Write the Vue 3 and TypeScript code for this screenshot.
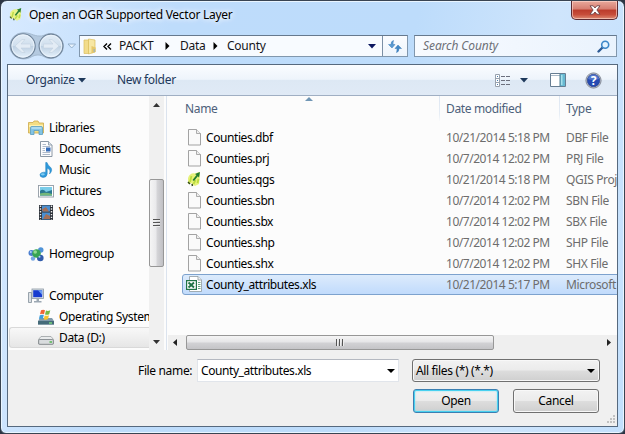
<script setup lang="ts">
interface TreeItem {
  label: string
  icon: string
  level: number
  selected?: boolean
}
interface FileRow {
  name: string
  date: string
  type: string
  icon: 'file' | 'qgis' | 'excel'
  selected?: boolean
}

const groups: TreeItem[][] = [
  [
    { label: 'Libraries', icon: 'libraries', level: 0 },
    { label: 'Documents', icon: 'documents', level: 1 },
    { label: 'Music', icon: 'music', level: 1 },
    { label: 'Pictures', icon: 'pictures', level: 1 },
    { label: 'Videos', icon: 'videos', level: 1 },
  ],
  [{ label: 'Homegroup', icon: 'homegroup', level: 0 }],
  [
    { label: 'Computer', icon: 'computer', level: 0 },
    { label: 'Operating System', icon: 'system', level: 1 },
    { label: 'Data (D:)', icon: 'drive', level: 1, selected: true },
  ],
]

const files: FileRow[] = [
  { name: 'Counties.dbf', date: '10/21/2014 5:18 PM', type: 'DBF File', icon: 'file' },
  { name: 'Counties.prj', date: '10/7/2014 12:02 PM', type: 'PRJ File', icon: 'file' },
  { name: 'Counties.qgs', date: '10/21/2014 5:18 PM', type: 'QGIS Proj', icon: 'qgis' },
  { name: 'Counties.sbn', date: '10/7/2014 12:02 PM', type: 'SBN File', icon: 'file' },
  { name: 'Counties.sbx', date: '10/7/2014 12:02 PM', type: 'SBX File', icon: 'file' },
  { name: 'Counties.shp', date: '10/7/2014 12:02 PM', type: 'SHP File', icon: 'file' },
  { name: 'Counties.shx', date: '10/7/2014 12:02 PM', type: 'SHX File', icon: 'file' },
  { name: 'County_attributes.xls', date: '10/21/2014 5:17 PM', type: 'Microsoft', icon: 'excel', selected: true },
]
</script>

<template>
  <div class="window">
    <header class="titlebar">
      <svg class="app-icon" viewBox="0 0 16 16">
        <path d="M1 7 Q3 1 9 2 L13 1 L14 4 L13 13 L9 15 L5 12 L2 13 Z" fill="#e9f38a" />
        <path d="M3.5 11 L5 5 M7 13 L9.5 9 M11.5 12 L12.5 8" stroke="#c0dc48" stroke-width="1.8" />
        <path d="M6.5 8.5 L10.5 3.5 L9 2.5 L14 .5 L13 6 L11.7 4.8 L8 9.5 Z" fill="#2b8038" />
        <path d="M1 10.5 L3 12.5 M5 12.5 L6 14.5" stroke="#3d5a28" stroke-width="1.3" />
      </svg>
      <h1 class="title">Open an OGR Supported Vector Layer</h1>
      <button class="close" aria-label="Close">
        <svg viewBox="0 0 12 10" width="12" height="10">
          <path d="M1 .8 H4.2 L6 3 L7.8 .8 H11 L7.9 5 L11 9.2 H7.8 L6 7 L4.2 9.2 H1 L4.1 5 Z" fill="#fff" stroke="#6d4145" stroke-width=".9" />
        </svg>
      </button>
    </header>

    <nav class="address-row">
      <svg class="nav-buttons" width="70" height="28" viewBox="0 0 70 28">
        <defs>
          <linearGradient id="orb" x1="0" y1="0" x2="0" y2="1">
            <stop offset="0" stop-color="#e3edf7" />
            <stop offset=".48" stop-color="#d0dfed" />
            <stop offset=".52" stop-color="#bfd1e3" />
            <stop offset="1" stop-color="#e6f2fc" />
          </linearGradient>
        </defs>
        <path d="M14 .7 C22 .7 24 4 31 4 C36 4 36 1.5 42 1.5 A12.4 12.4 0 0 1 42 26.5 C35 26.5 35 23 29 23 C23 23 22 27 14 27 A13 13 0 0 1 14 .7Z" fill="#b4c9df" stroke="#9db2c8" stroke-width=".8" />
        <circle cx="14" cy="14" r="12.2" fill="url(#orb)" stroke="#70849a" stroke-width="1.1" />
        <circle cx="14" cy="14" r="11" fill="none" stroke="#edf5fc" stroke-width=".8" />
        <circle cx="42" cy="14" r="11.9" fill="url(#orb)" stroke="#70849a" stroke-width="1.1" />
        <circle cx="42" cy="14" r="10.7" fill="none" stroke="#edf5fc" stroke-width=".8" />
        <path d="M6 14 L13 7.5 H16 L12 12 H21.5 V16 H12 L16 20.5 H13 Z" fill="#e3ecf5" stroke="#c3d1df" stroke-width=".6" />
        <path d="M50 14 L43 7.5 H40 L44 12 H34.5 V16 H44 L40 20.5 H43 Z" fill="#e3ecf5" stroke="#c3d1df" stroke-width=".6" />
        <path d="M59 12 H66.5 L62.7 16 Z" fill="#e8f3fd" stroke="#8fabc8" stroke-width=".9" />
      </svg>
      <div class="address">
        <svg width="14" height="17" viewBox="0 0 14 17">
          <path d="M1 2 H6 V15.5 H1 Z" fill="#f2dc8b" stroke="#dbbf62" stroke-width=".7" />
          <path d="M5.5 1 L12 2 V14 L5.5 16 Z" fill="#f7e7a4" stroke="#d9bb5a" stroke-width=".7" />
          <path d="M8.5 8 L12.7 9.5 V14 L8.5 15.5 Z" fill="#e6c86a" />
          <path d="M11.2 11 V14" stroke="#8faecb" />
        </svg>
        <svg class="chevrons" width="9" height="7" viewBox="0 0 9 7">
          <path d="M4 .5 L1 3.5 L4 6.5 M8 .5 L5 3.5 L8 6.5" fill="none" stroke="#000" stroke-width="1.4" />
        </svg>
        <span class="crumb c1">PACKT</span>
        <svg class="sep" width="5" height="8" viewBox="0 0 5 8"><path d="M.5 0 L4.5 4 L.5 8Z" /></svg>
        <span class="crumb c2">Data</span>
        <svg class="sep" width="5" height="8" viewBox="0 0 5 8"><path d="M.5 0 L4.5 4 L.5 8Z" /></svg>
        <span class="crumb c3">County</span>
        <svg class="drop" width="8" height="5" viewBox="0 0 8 5"><path d="M0 0 H8 L4 4.5Z" fill="#0b1660" /></svg>
        <button class="refresh" aria-label="Refresh">
          <svg width="14" height="13" viewBox="0 0 14 13">
            <path d="M5.5 .5 Q3 1 3 4.5 H.5 L4 8 L7 4.5 H5 Q5 2 5.5 .5Z" fill="#5b9bd2" stroke="#3879b5" stroke-width=".5" />
            <path d="M8.5 12.5 Q11 12 11 8.5 H13.5 L10 5 L7 8.5 H9 Q9 11 8.5 12.5Z" fill="#4288c6" stroke="#3879b5" stroke-width=".5" />
          </svg>
        </button>
      </div>
      <div class="search">
        <span>Search County</span>
        <svg width="13" height="13" viewBox="0 0 13 13">
          <path d="M6 7 L1.5 11.5" stroke="#2d5b95" stroke-width="2.4" stroke-linecap="round" />
          <circle cx="8.2" cy="4.7" r="3.5" fill="#e3f3ff" stroke="#3c87c8" stroke-width="1.6" />
        </svg>
      </div>
    </nav>

    <main class="client">
      <div class="toolbar">
        <span class="organize">Organize</span>
        <svg class="org-arrow" width="8" height="5" viewBox="0 0 8 5"><path d="M0 0 H8 L4 4.6Z" fill="#1e395b" /></svg>
        <span class="new-folder">New folder</span>
        <svg class="views" width="16" height="13" viewBox="0 0 16 13">
          <path d="M.5 .5 H4.5 V12.5 H.5 Z M.5 4.5 H4.5 M.5 8.5 H4.5" fill="#fff" stroke="#98a1ad" />
          <path d="M2 2.5 H3 M2 6.5 H3 M2 10.5 H3" stroke="#477db1" />
          <path d="M6 2.5 H10 M11 2.5 H15 M6 6.5 H10 M11 6.5 H15 M6 10.5 H10 M11 10.5 H15" stroke="#6b6f7d" />
        </svg>
        <svg class="view-arrow" width="8" height="5" viewBox="0 0 8 5"><path d="M0 0 H8 L4 4.6Z" fill="#1e395b" /></svg>
        <svg class="preview" width="16" height="14" viewBox="0 0 16 14">
          <path d="M.5 .5 H15.5 V13.5 H.5 Z" fill="#fff" stroke="#667d92" />
          <path d="M1 2.5 H10" stroke="#a9b9c8" />
          <path d="M10 1 H15 V13 H10 Z" fill="#67b9d2" />
          <path d="M11 2 H12.5 V12 H11Z" fill="#a6e1ec" />
          <path d="M10 1 V13" stroke="#517e93" />
        </svg>
        <svg class="help" width="17" height="17" viewBox="0 0 17 17">
          <circle cx="8.5" cy="8.5" r="7.6" fill="#d6d9de" stroke="#777e8b" stroke-width=".9" />
          <circle cx="8.5" cy="8.5" r="6.3" fill="#264bb2" stroke="#243b80" stroke-width=".6" />
          <path d="M3 7 Q4 2.8 8.5 2.8 Q13 2.8 14 7 Q8 9 3 7Z" fill="#5377cd" />
          <text x="8.5" y="12.8" text-anchor="middle" fill="#fff" font-size="12" font-weight="700">?</text>
        </svg>
      </div>

      <div class="browser">
        <aside class="tree">
          <ul v-for="(group, g) in groups" :key="g">
            <li v-for="item in group" :key="item.label" :class="['node', 'level-' + item.level, { current: item.selected }]">
              <svg width="16" height="16" viewBox="0 0 16 16">
                <g v-if="item.icon === 'libraries'">
                  <path d="M.5 13 V2.5 H5 L6 1 H10 L11 3 H15.5 V13 Z" fill="#f3dd83" stroke="#cda84a" stroke-width=".8" />
                  <path d="M1 5 H15 V7 H1Z" fill="#fff1ad" />
                  <path d="M2.5 14.5 V7.5 Q2.5 6.5 4 6.5 H13 Q14.5 6.5 14.5 7.5 V14.5 H11 V10.5 H6 V14.5 Z" fill="#83c4e4" stroke="#5c9dc0" stroke-width=".8" />
                  <path d="M3.5 8 H13.5" stroke="#d6f0fa" />
                </g>
                <g v-else-if="item.icon === 'documents'">
                  <path d="M2.5 .5 H10.5 L14 4 V15.5 H2.5 Z" fill="#fdfdfe" stroke="#7f8d9c" stroke-width=".9" />
                  <path d="M10.5 .5 V4 H14" fill="#dce4ec" stroke="#8795a3" stroke-width=".8" />
                  <path d="M4.5 3.5 H8 M4.5 5.5 H12 M4.5 7.5 H7 M4.5 9.5 H7 M4.5 11.5 H12 M4.5 13.5 H12" stroke="#9baabd" stroke-width=".8" />
                  <rect x="8" y="6.5" width="4.5" height="4" fill="#356dba" />
                </g>
                <g v-else-if="item.icon === 'music'">
                  <path d="M7.7 .5 H9 Q9.6 3.2 12.5 5.2 Q15.3 8.2 11.5 12 Q13.2 7.5 9.2 6.2 V12 Q8.7 15.5 5 15.5 Q1.7 15.2 2 12.6 Q2.7 9.9 7.7 10.2 Z" fill="#2e99dc" stroke="#2381bd" stroke-width=".5" />
                  <ellipse cx="4.8" cy="12.3" rx="2" ry="1.1" fill="#81cdf2" />
                </g>
                <g v-else-if="item.icon === 'pictures'">
                  <rect x=".5" y="2.5" width="15" height="11.5" fill="#fff" stroke="#929ba5" stroke-width=".9" />
                  <rect x="2" y="4" width="12" height="8.5" fill="#79cce9" />
                  <path d="M2 8 Q5 5 8 9 L14 7 V12.5 H2Z" fill="#2b7890" />
                  <path d="M2 10.5 Q8 9 14 11 V12.5 H2Z" fill="#75b879" />
                </g>
                <g v-else-if="item.icon === 'videos'">
                  <rect x="1" y="1" width="14" height="15" fill="#2b3038" />
                  <path d="M4 1.5 H12 V7.5 H4Z M4 8.5 H12 V15.5 H4Z" fill="#4b8fd0" />
                  <path d="M4 5.5 L8 3 L11 7.5 H5Z M5 15 L8 10 L12 12 V15Z" fill="#a66f57" />
                  <path d="M2.5 1.5 V16 M13.5 1.5 V16" stroke="#eee" stroke-width="1.4" stroke-dasharray="1.4 1.4" />
                </g>
                <g v-else-if="item.icon === 'homegroup'">
                  <circle cx="3.5" cy="7" r="3" fill="#4a7ed0" />
                  <circle cx="12.8" cy="4" r="2.7" fill="#4f93d8" />
                  <circle cx="12.3" cy="12" r="3.3" fill="#315cac" />
                  <circle cx="5" cy="12.5" r="2.2" fill="#77a7e2" />
                  <circle cx="8.5" cy="7.5" r="4.3" fill="#36a453" />
                  <circle cx="7.2" cy="6" r="1.8" fill="#93da92" />
                  <circle cx="11.5" cy="10.8" r="1" fill="#a9cdf5" />
                  <circle cx="2.8" cy="6" r="1" fill="#b3d5f8" />
                </g>
                <g v-else-if="item.icon === 'computer'">
                  <path d="M.5 4.5 H3.5 V14.5 H.5Z" fill="#dce1e5" stroke="#838f9b" stroke-width=".8" />
                  <rect x="4" y="1" width="11.5" height="9.5" fill="#dce2e8" stroke="#8b98a4" stroke-width=".8" />
                  <rect x="5.2" y="2.2" width="9" height="7" fill="#173bd0" />
                  <path d="M10 2.2 H14.2 V7Z" fill="#6c9df2" />
                  <path d="M8.5 11 H11 V13 H13.5 V14.5 H6 V13 H8.5Z" fill="#9ca8b3" />
                </g>
                <g v-else-if="item.icon === 'system'">
                  <path d="M2 9 H14 L16 12 V15.5 H0 V12Z" fill="#819aaa" />
                  <path d="M0 12 H16 V15.5 H0Z" fill="#456b79" />
                  <path d="M11 14 H14" stroke="#80e57c" stroke-width="1.3" />
                  <path d="M3 1.3 Q5 .2 7 1.2 L6 5.2 Q4 4.2 2 5.2Z" fill="#f16435" />
                  <path d="M8 1.6 Q10 2.5 12.3 1.3 L11.2 5.2 Q9 6.4 7 5.4Z" fill="#78b944" />
                  <path d="M1.8 6.2 Q4 5.2 5.8 6.1 L4.8 10 Q3 9 .9 10Z" fill="#3e9edc" />
                  <path d="M6.7 6.4 Q9 7.4 11 6.2 L10 10 Q8 11.3 5.7 10.2Z" fill="#f8c42e" />
                </g>
                <g v-else>
                  <path d="M3 6.5 H13 L15.5 9.5 V14 H.5 V9.5Z" fill="#e9ebec" stroke="#9b9fa2" stroke-width=".8" />
                  <rect x=".7" y="9.5" width="14.6" height="4.8" rx="1" fill="#d9dcde" stroke="#777d81" stroke-width=".8" />
                  <path d="M11.5 12 H14" stroke="#52b64f" stroke-width="1.5" />
                </g>
              </svg>
              <span>{{ item.label }}</span>
            </li>
          </ul>
        </aside>

        <div class="vscroll">
          <svg width="7" height="4" viewBox="0 0 7 4"><path d="M0 4 L3.5 0 L7 4Z" fill="#333" /></svg>
          <div class="vthumb"><i></i><i></i><i></i></div>
          <svg width="7" height="4" viewBox="0 0 7 4"><path d="M0 0 L3.5 4 L7 0Z" fill="#333" /></svg>
        </div>

        <section class="listing">
          <div class="columns">
            <div class="col-name">
              <span>Name</span>
              <svg class="sort" width="8" height="4" viewBox="0 0 8 4"><path d="M0 4 L4 0 L8 4Z" fill="#7096b5" /></svg>
            </div>
            <div class="col-date">Date modified</div>
            <div class="col-type">Type</div>
          </div>
          <div class="rows">
            <div v-for="file in files" :key="file.name" :class="['row', { chosen: file.selected }]">
              <div class="cell-name">
                <svg width="17" height="17" viewBox="0 0 17 17">
                  <g v-if="file.icon === 'file'">
                    <path d="M2.5 .5 H10.5 L14.5 4.5 V16 H2.5 Z" fill="#fafafa" stroke="#999" stroke-width=".9" />
                    <path d="M10.5 .5 V4.5 H14.5" fill="#eee" stroke="#999" stroke-width=".8" />
                  </g>
                  <g v-else-if="file.icon === 'qgis'">
                    <path d="M2 7 Q4 1.5 9 2.5 L13 1 L14 4 L13 13 L9 15 L5 12 L2 13 Z" fill="#e6f27a" />
                    <path d="M4 11 L5.5 5 M7.5 13 L9.5 9 M11.5 12 L12.5 8" stroke="#bcdc3e" stroke-width="1.8" />
                    <path d="M6.5 9 L10.5 4 L9 3 L14 1 L13 6.5 L11.8 5.2 L8 10 Z" fill="#1f7a2e" />
                    <path d="M2 11 L4 13 M6 13 L6.5 15" stroke="#314b18" stroke-width="1.5" />
                  </g>
                  <g v-else>
                    <path d="M3.5 .5 H12 L15.5 4 V15.5 H3.5 Z" fill="#fff" stroke="#8f9ba0" stroke-width=".8" />
                    <path d="M12 .5 V4 H15.5" fill="#eef1f2" stroke="#8f9ba0" stroke-width=".8" />
                    <path d="M12 6.5 H14.5 M12 8.5 H14.5 M12 10.5 H14.5 M12 12.5 H14.5" stroke="#66a67f" />
                    <rect x=".6" y="4.6" width="9.8" height="8.8" fill="#fff" stroke="#217446" stroke-width="1.2" />
                    <path d="M2.5 6.5 L8 11.5 M8 6.5 L2.5 11.5" stroke="#217446" stroke-width="1.9" />
                  </g>
                </svg>
                <span>{{ file.name }}</span>
              </div>
              <div class="cell-date">{{ file.date }}</div>
              <div class="cell-type">{{ file.type }}</div>
            </div>
          </div>
          <div class="hscroll">
            <svg width="4" height="7" viewBox="0 0 4 7"><path d="M4 0 L0 3.5 L4 7Z" fill="#222" /></svg>
            <div class="hthumb"><i></i><i></i><i></i></div>
            <svg class="right" width="4" height="7" viewBox="0 0 4 7"><path d="M0 0 L4 3.5 L0 7Z" fill="#222" /></svg>
          </div>
        </section>
      </div>

      <footer class="footer">
        <div class="name-line">
          <label>File name:</label>
          <div class="combo"><span>County_attributes.xls</span><svg width="8" height="4" viewBox="0 0 8 4"><path d="M0 0 H8 L4 4Z" /></svg></div>
          <div class="filter"><span>All files (*) (*.*)</span><svg width="8" height="4" viewBox="0 0 8 4"><path d="M0 0 H8 L4 4Z" /></svg></div>
        </div>
        <div class="actions">
          <button class="btn primary">Open</button>
          <button class="btn">Cancel</button>
        </div>
        <svg class="grip" width="8" height="8" viewBox="0 0 8 8">
          <path d="M6 0h2v2h-2z M3 3h2v2h-2z M6 3h2v2h-2z M0 6h2v2h-2z M3 6h2v2h-2z M6 6h2v2h-2z" fill="#c2c2c2" />
        </svg>
      </footer>
    </main>
  </div>
</template>

<style>
html,
body {
  margin: 0;
  overflow: hidden;
  background: #2c3544;
}
</style>

<style scoped>
* {
  box-sizing: border-box;
}
.window {
  width: 625px;
  height: 434px;
  padding: 0 6px 6px;
  display: flex;
  flex-direction: column;
  border: 1px solid #394452;
  border-radius: 7px 7px 6px 6px;
  background: linear-gradient(100deg, #d8eaff 0, #bedcfb 25%, #bddcfb 60%, #cfe5fc 80%, #c3e0fd 100%);
  box-shadow: inset 0 0 0 1px #e9f5ff;
  font-family: "Noto Sans", "Open Sans", sans-serif;
  font-size: 12px;
  letter-spacing: -0.35px;
  line-height: 16px;
  color: #000;
  white-space: nowrap;
}
svg {
  display: block;
  flex: none;
}
button {
  font: inherit;
  letter-spacing: inherit;
  padding: 0;
}
.titlebar {
  height: 33px;
  flex: none;
  display: flex;
  align-items: flex-start;
  padding-left: 2px;
}
.app-icon {
  width: 14px;
  height: 15px;
  margin-top: 6px;
}
.title {
  margin: 6px 0 0 6px;
  font-size: 12px;
  font-weight: 400;
  letter-spacing: -0.27px;
  text-shadow: 0 0 7px #fff, 0 0 5px #fff;
}
.close {
  width: 47px;
  height: 19px;
  margin-left: auto;
  display: flex;
  align-items: center;
  justify-content: center;
  border: 1px solid #5b2a31;
  border-top: 0;
  border-radius: 0 0 5px 5px;
  background: linear-gradient(#e9a99c, #d67d70 45%, #bb3b2b 50%, #c74d3a 75%, #dc8b74);
  box-shadow: inset 0 0 0 1px rgba(255, 220, 210, 0.6);
}
.address-row {
  height: 30px;
  flex: none;
  display: flex;
  align-items: flex-start;
  padding-left: 2px;
}
.nav-buttons {
  margin-top: -2px;
}
.address,
.search {
  height: 22px;
  margin-top: 1px;
  display: flex;
  align-items: center;
  border: 1px solid #8197ad;
  border-top-color: #66798e;
  background: #f8fbff;
}
.address {
  width: 329px;
  padding-left: 3px;
}
.chevrons {
  margin-left: 6px;
}
.crumb {
  color: #15151a;
  letter-spacing: -0.25px;
}
.c1 {
  width: 46px;
  margin-left: 7px;
}
.c2 {
  width: 33px;
  margin-left: 10px;
}
.c3 {
  margin-left: 9px;
}
.drop {
  margin-left: auto;
}
.refresh {
  align-self: stretch;
  width: 25px;
  margin-left: 6px;
  display: flex;
  align-items: center;
  justify-content: center;
  border: 0;
  border-left: 1px solid #7b8fa5;
  background: linear-gradient(#fafcff, #eef5fc);
}
.search {
  width: 203px;
  margin-left: 6px;
  padding: 0 6px 0 8px;
  justify-content: space-between;
  background: linear-gradient(90deg, #f8fbff, #eaf3fd);
  color: #6d7077;
  font-style: italic;
  letter-spacing: -0.08px;
}
.client {
  flex: 1;
  min-height: 0;
  display: flex;
  flex-direction: column;
  border: 1px solid #56697e;
  background: #fcfcfc;
}
.toolbar {
  height: 31px;
  flex: none;
  display: flex;
  align-items: center;
  padding: 0 15px 0 18px;
  border-bottom: 1px solid #a0afc3;
  background: linear-gradient(#fafcff, #eef4fb 48%, #dde8f4 50%, #e0eaf6);
  color: #1e395b;
  letter-spacing: -0.3px;
}
.org-arrow {
  margin-left: 5px;
}
.organize {
  width: 47px;
}
.new-folder {
  margin-left: 31px;
}
.views {
  margin-left: auto;
}
.view-arrow {
  margin-left: 9px;
}
.preview {
  margin-left: 22px;
}
.help {
  margin-left: 19px;
}
.browser {
  height: 254px;
  flex: none;
  display: flex;
}
.tree {
  width: 141px;
  padding: 21px 0 0 1px;
  overflow: hidden;
}
.tree ul {
  margin: 0 0 21px;
  padding: 0;
  list-style: none;
}
.node {
  height: 21px;
  display: flex;
  align-items: center;
  gap: 5px;
  padding-left: 19px;
}
.node.level-1 {
  padding-left: 29px;
}
.node.current {
  border: 1px solid #d9d9d9;
  border-right: 0;
  border-radius: 3px 0 0 3px;
  padding-left: 28px;
  background: linear-gradient(#f8f8f8, #e6e6e6);
}
.vscroll {
  width: 15px;
  display: flex;
  flex-direction: column;
  align-items: center;
  padding: 7px 0 6px;
  background: #f0f0f0;
}
.vthumb {
  width: 15px;
  height: 88px;
  margin: 72px 0 auto;
  display: flex;
  flex-direction: column;
  align-items: center;
  justify-content: center;
  gap: 1px;
  border: 1px solid #979797;
  border-radius: 2px;
  background: linear-gradient(90deg, #f5f5f5, #e9e9eb 48%, #d6d6d9 52%, #c0c0c4);
}
.vthumb i {
  width: 7px;
  height: 2px;
  background: linear-gradient(#555 50%, #eee 50%);
}
.listing {
  flex: 1;
  min-width: 0;
  display: flex;
  flex-direction: column;
  margin-left: 2px;
  border-left: 1px solid #dbe3ee;
  padding-left: 1px;
  overflow: hidden;
}
.columns {
  height: 25px;
  flex: none;
  display: flex;
  color: #4c607a;
  line-height: 26px;
}
.col-name {
  width: 271px;
  display: flex;
  align-items: flex-start;
  padding-left: 17px;
}
.col-name span {
  width: 120px;
}
.sort {
  margin-top: 1px;
}
.col-date,
.col-type {
  border-left: 1px solid;
  border-image: linear-gradient(#dde6f2, #e6edf5 70%, transparent) 1;
  padding-left: 6px;
}
.col-date {
  width: 120px;
}
.rows {
  flex: 1;
  padding: 6px 0 0 14px;
}
.row {
  height: 21px;
  display: flex;
  align-items: center;
  width: 460px;
  border: 1px solid transparent;
  color: #6d6d6d;
}
.row.chosen {
  border-color: #7da2ce;
  border-radius: 3px;
  background: linear-gradient(#dcebfc, #c1dbfc);
}
.cell-name {
  flex: none;
  width: 263px;
  display: flex;
  align-items: center;
  gap: 3px;
  padding-left: 3px;
  color: #000;
  letter-spacing: -0.42px;
}
.cell-date {
  flex: none;
  width: 120px;
  letter-spacing: -0.46px;
}
.hscroll {
  height: 15px;
  flex: none;
  display: flex;
  align-items: center;
  padding: 0 6px 0 5px;
  background: #efefef;
}
.hthumb {
  width: 308px;
  height: 15px;
  margin-left: 9px;
  display: flex;
  align-items: center;
  justify-content: center;
  gap: 1px;
  border: 1px solid #979797;
  border-radius: 2px;
  background: linear-gradient(#f5f5f5, #e5e5e7 48%, #d2d2d5 52%, #c4c4c7);
}
.hthumb i {
  width: 2px;
  height: 7px;
  background: linear-gradient(90deg, #555 50%, #eee 50%);
}
.right {
  margin-left: auto;
}
.footer {
  position: relative;
  flex: 1;
  padding-top: 9px;
  background: #f0f0f0;
}
.name-line {
  display: flex;
  align-items: center;
  height: 23px;
  padding-left: 130px;
}
.name-line label {
  width: 59px;
}
.combo,
.filter {
  display: flex;
  align-items: center;
  justify-content: space-between;
}
.combo {
  width: 202px;
  height: 23px;
  padding: 0 3px;
  border: 1px solid #e1e5eb;
  border-top-color: #b5b9c1;
  background: #fff;
  letter-spacing: -0.42px;
}
.filter {
  width: 188px;
  height: 23px;
  margin-left: 13px;
  padding: 0 4px 0 3px;
  border: 1px solid #707070;
  border-radius: 3px;
  background: linear-gradient(#f2f2f2, #ebebeb 48%, #dddddd 52%, #cfcfcf);
  box-shadow: inset 0 0 0 1px #f8f8f8;
}
.actions {
  display: flex;
  gap: 14px;
  margin-top: 7px;
  padding-left: 405px;
}
.btn {
  width: 86px;
  height: 24px;
  border: 1px solid #707070;
  border-radius: 3px;
  background: linear-gradient(#f2f2f2, #ebebeb 48%, #dddddd 52%, #cfcfcf);
  box-shadow: inset 0 0 0 1px #f8f8f8;
  color: #000;
}
.btn.primary {
  border-color: #3c7fb1;
  box-shadow: inset 0 0 0 1px #48d1f0, inset 0 0 2px 1px #8be4f7;
}
.grip {
  position: absolute;
  right: 2px;
  bottom: 3px;
}
</style>
